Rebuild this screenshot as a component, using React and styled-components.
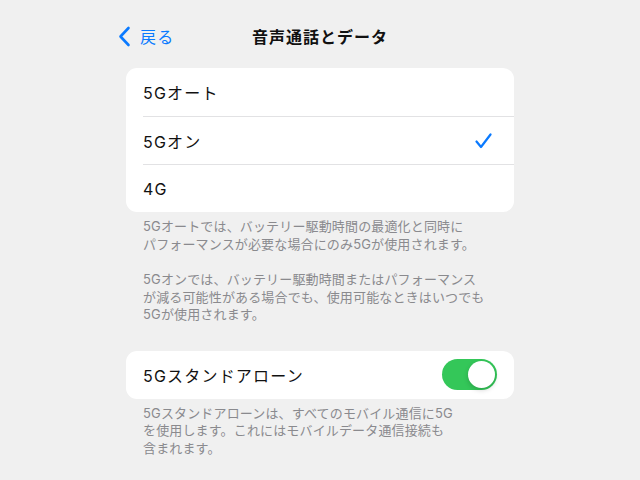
import React from 'react';
import styled, { createGlobalStyle } from 'styled-components';

const Global = createGlobalStyle`
  html, body {
    margin: 0;
    padding: 0;
    background: #f0f0f0;
    font-family: Inter, "Noto Sans CJK JP", sans-serif;
    -webkit-font-smoothing: antialiased;
  }
`;

const Page = styled.div`
  width: 640px;
  min-height: 480px;
  display: flex;
  flex-direction: column;
  align-items: center;
`;

const NavBar = styled.div`
  width: 404px;
  height: 68px;
  display: grid;
  grid-template-columns: 1fr auto 1fr;
  align-items: center;
  box-sizing: border-box;
`;

const Back = styled.div`
  display: flex;
  align-items: center;
  gap: 9px;
  color: #0a7aff;
  font-size: 16px;
  letter-spacing: 1.2px;
  margin-top: 4px;
`;

const Title = styled.div`
  font-size: 16px;
  font-weight: 700;
  letter-spacing: 1px;
  color: #111;
  margin-top: 4px;
`;

const Card = styled.div`
  width: 388px;
  background: #fff;
  border-radius: 11px;
  overflow: hidden;
`;

const Row = styled.div`
  height: 48px;
  display: flex;
  align-items: center;
  justify-content: space-between;
  margin-left: 17px;
  padding-right: 22px;
  font-size: 16px;
  letter-spacing: 1.2px;
  color: #111;
  border-top: ${p => (p.first ? 'none' : '1px solid #e2e2e4')};
  box-sizing: border-box;
`;

const ToggleRow = styled(Row)`
  padding-right: 17px;
`;

const Note = styled.div`
  width: 388px;
  box-sizing: border-box;
  padding: 6px 17px 0;
  font-size: 13px;
  line-height: 17.5px;
  letter-spacing: 0.15px;
  color: #8a8a8e;
  margin-bottom: ${p => p.gap || 0}px;

  p {
    margin: 0 0 18px;
  }
  p:last-child {
    margin: 0;
  }
`;

const Toggle = styled.div`
  width: 55px;
  height: 31px;
  border-radius: 16px;
  background: #34c759;
  position: relative;

  &::after {
    content: '';
    position: absolute;
    top: 2px;
    right: 2px;
    width: 27px;
    height: 27px;
    border-radius: 50%;
    background: #fff;
    box-shadow: 0 2px 5px rgba(0, 0, 0, 0.18);
  }
`;

const Chevron = () => (
  <svg width="13" height="21" viewBox="0 0 13 21">
    <path d="M10.5 2 L2.5 10.5 L10.5 19" fill="none" stroke="#0a7aff" strokeWidth="2.6" strokeLinecap="round" strokeLinejoin="round" />
  </svg>
);

const Check = () => (
  <svg width="17" height="16" viewBox="0 0 17 16">
    <path d="M1.5 8.5 L6 14 L15.5 1.5" fill="none" stroke="#0a7aff" strokeWidth="2.2" strokeLinecap="round" strokeLinejoin="round" />
  </svg>
);

const options = [
  { label: '5Gオート' },
  { label: '5Gオン', checked: true },
  { label: '4G' },
];

export default function App() {
  return (
    <Page>
      <Global />
      <NavBar>
        <Back>
          <Chevron />
          <span>戻る</span>
        </Back>
        <Title>音声通話とデータ</Title>
        <div />
      </NavBar>

      <Card>
        {options.map((o, i) => (
          <Row key={o.label} first={i === 0}>
            <span>{o.label}</span>
            {o.checked && <Check />}
          </Row>
        ))}
      </Card>
      <Note gap={27}>
        <p>5Gオートでは、バッテリー駆動時間の最適化と同時に<br />パフォーマンスが必要な場合にのみ5Gが使用されます。</p>
        <p>5Gオンでは、バッテリー駆動時間またはパフォーマンス<br />が減る可能性がある場合でも、使用可能なときはいつでも<br />5Gが使用されます。</p>
      </Note>

      <Card>
        <ToggleRow first>
          <span>5Gスタンドアローン</span>
          <Toggle />
        </ToggleRow>
      </Card>
      <Note>
        <p>5Gスタンドアローンは、すべてのモバイル通信に5G<br />を使用します。これにはモバイルデータ通信接続も<br />含まれます。</p>
      </Note>
    </Page>
  );
}
